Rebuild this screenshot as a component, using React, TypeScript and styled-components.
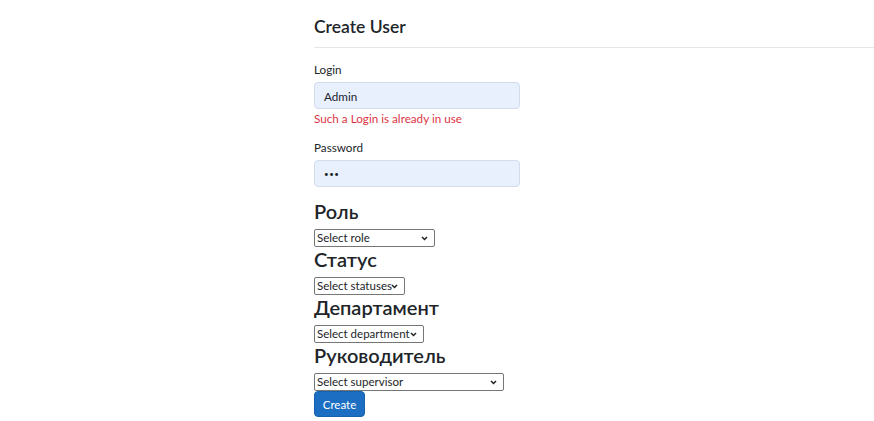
import React from "react";
import styled, { createGlobalStyle } from "styled-components";

const Global = createGlobalStyle`
  html, body { margin: 0; padding: 0; background: #fff; }
  body {
    font-family: Lato, "Noto Sans", sans-serif;
    color: #212529;
  }
  * { box-sizing: border-box; }
`;

const Page = styled.main`
  padding: 17px 0 0 314px;
`;

const Title = styled.h4`
  margin: 0 0 10px;
  font-size: 17.5px;
  font-weight: 600;
  line-height: 20px;
`;

const Rule = styled.hr`
  margin: 0 0 12px;
  border: 0;
  border-top: 1px solid #e6e6e6;
`;

const Group = styled.div<{ $mb?: number }>`
  display: flex;
  flex-direction: column;
  align-items: flex-start;
  margin-bottom: ${(p) => p.$mb ?? 11}px;
`;

const Label = styled.label`
  font-size: 11.7px;
  line-height: 18px;
  margin-bottom: 4px;
`;

const Input = styled.input<{ $dots?: boolean }>`
  width: 206px;
  height: 27px;
  padding: 0 9px;
  font-family: inherit;
  font-size: ${(p) => (p.$dots ? "8px" : "11.7px")};
  letter-spacing: ${(p) => (p.$dots ? "0.5px" : "normal")};
  color: #212529;
  background: #e8f0fe;
  border: 1px solid #d3dced;
  border-radius: 4px;
  outline: none;
`;

const Error = styled.span`
  font-size: 11.7px;
  line-height: 18px;
  color: #dc3545;
`;

const Heading = styled.h3`
  margin: 0 0 6px;
  font-size: 20px;
  font-weight: 600;
  line-height: 24px;
`;

const chevron =
  "url(\"data:image/svg+xml,%3Csvg xmlns='http://www.w3.org/2000/svg' width='7' height='5' viewBox='0 0 7 5'%3E%3Cpath d='M1 1 L3.5 3.5 L6 1' fill='none' stroke='%23222' stroke-width='1.5'/%3E%3C/svg%3E\")";

const Select = styled.select<{ $w: number }>`
  display: block;
  width: ${(p) => p.$w}px;
  height: 18px;
  font-family: inherit;
  font-size: 11.5px;
  line-height: 16px;
  color: #212529;
  appearance: none;
  -webkit-appearance: none;
  background: #fff ${chevron} no-repeat right 6px center;
  border: 1px solid #767676;
  border-radius: 2px;
  padding: 0 12px 0 2px;
`;

const Button = styled.button`
  display: block;
  width: 51px;
  height: 26px;
  margin-top: 0;
  font-family: inherit;
  font-size: 11.5px;
  color: #fff;
  background: #1b6ec2;
  border: 1px solid #1861ac;
  border-radius: 4px;
  padding: 0;
`;

const selects = [
  { title: "Роль", placeholder: "Select role", w: 121 },
  { title: "Статус", placeholder: "Select statuses", w: 91 },
  { title: "Департамент", placeholder: "Select department", w: 110 },
  { title: "Руководитель", placeholder: "Select supervisor", w: 190 },
];

export default function App() {
  return (
    <>
      <Global />
      <Page>
        <Title>Create User</Title>
        <Rule />
        <Group>
          <Label>Login</Label>
          <Input defaultValue="Admin" />
          <Error>Such a Login is already in use</Error>
        </Group>
        <Group $mb={12}>
          <Label>Password</Label>
          <Input $dots type="password" defaultValue="123" />
        </Group>
        {selects.map((s) => (
          <div key={s.title}>
            <Heading>{s.title}</Heading>
            <Select $w={s.w} defaultValue="">
              <option value="">{s.placeholder}</option>
            </Select>
          </div>
        ))}
        <Button>Create</Button>
      </Page>
    </>
  );
}
